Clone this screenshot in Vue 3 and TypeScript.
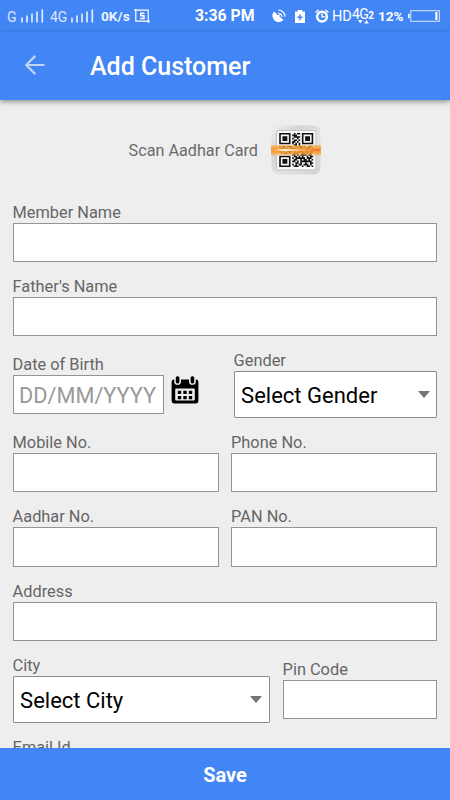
<script setup lang="ts">
import { reactive } from 'vue'

const form = reactive({
  memberName: '',
  fatherName: '',
  birthDate: '',
  mobile: '',
  phone: '',
  aadhar: '',
  pan: '',
  address: '',
  pinCode: '',
})

const qrRows: string[] = [
  '111111100101101111111',
  '100000101110001000001',
  '101110100111101011101',
  '101110101001001011101',
  '101110100110101011101',
  '100000101101001000001',
  '111111101010101111111',
  '000000000110100000000',
  '101101110010110100110',
  '011010011101011011101',
  '110110101011010110010',
  '101001110100111011011',
  '010110100111001101010',
  '000000001101011110110',
  '111111100110101001011',
  '100000101011111101110',
  '101110100110010110101',
  '101110101101011111110',
  '101110100011010010011',
  '100000101010110111010',
  '111111100111001001101',
]

const qrPath: string = qrRows
  .flatMap((row, y) => [...row].map((cell, x) => (cell === '1' ? `M${x} ${y}h1v1h-1z` : '')))
  .join('')
</script>

<template>
  <div class="screen">
    <div class="status">
      <span class="net g1">G</span>
      <svg class="bars" viewBox="0 0 24 14"><path d="M1 8.5v5M6 6.5v7M11 4.5v9M16 2.5v11M21.3 .5v13" /></svg>
      <span class="net g4">4G</span>
      <svg class="bars" viewBox="0 0 24 14"><path d="M1 8.5v5M6 6.5v7M11 4.5v9M16 2.5v11M21.3 .5v13" /></svg>
      <span class="speed">0K/s</span>
      <svg class="shot" viewBox="0 0 16 14">
        <path d="M0 1.2h14.2V14M1.8 0v12.2H16" fill="none" stroke="#fff" stroke-width="1.2" />
        <path d="M10.4 4.2H6.8v2.6h3.2v2.7H6.2" fill="none" stroke="#fff" stroke-width="1.5" />
      </svg>
      <span class="time">3:36 PM</span>
      <svg class="dish" viewBox="0 0 14 14">
        <path d="M2 2.5 11.5 11A6.3 6.3 0 0 1 2 2.5z" fill="#fff" />
        <path d="M6 4a4.3 4.3 0 0 1 4 4M6.3 1a6.8 6.8 0 0 1 6.7 6.7M6 7l3-2" fill="none" stroke="#fff" stroke-width="1.2" />
      </svg>
      <svg class="saver" viewBox="0 0 10 13">
        <path d="M0 1.5h2.7V0h4.6v1.5H10V13H0z" fill="#fff" />
        <path d="M5.8 3.2 2 8h2.5L4 11.2 8 6.4H5.4z" fill="#4285f4" />
      </svg>
      <svg class="alarm" viewBox="0 0 14 14">
        <circle cx="7" cy="7.6" r="4.9" fill="none" stroke="#fff" stroke-width="2.4" />
        <path d="M7 4.6v3.3h3M.6 3.5 3.6.8M10.4.8l3 2.7" fill="none" stroke="#fff" stroke-width="1.4" />
      </svg>
      <span class="hd">HD</span>
      <span class="lte">
        <span>4G</span><b>2</b>
        <svg viewBox="0 0 12 4"><path d="M0 0h4.6L2.3 3.6zM6.2 3.6h4.6L8.5 0z" fill="#fff" /></svg>
      </span>
      <span class="percent">12%</span>
      <svg class="cell" viewBox="0 0 32 12">
        <path d="M2.7.6h28.7v10.8H2.7z" fill="none" stroke="#bdd4fc" stroke-width="1.2" />
        <path d="M0 3.8h1.6v4.5H0zM27.3 2h2.2v8h-2.2z" fill="#fff" />
      </svg>
    </div>

    <header class="toolbar">
      <svg class="back" viewBox="0 0 20 20"><path d="M19.5 10H1.5M10.3.9 1.2 10l9.1 9.1" /></svg>
      <h1>Add Customer</h1>
    </header>

    <main class="form">
      <div class="scan">
        <span>Scan Aadhar Card</span>
        <svg class="qr" viewBox="0 0 50 50">
          <defs>
            <linearGradient id="plate" x1="0" y1="0" x2="1" y2="1">
              <stop offset="0" stop-color="#f1f1f1" />
              <stop offset=".3" stop-color="#d2d4d5" />
              <stop offset=".6" stop-color="#e2e3e4" />
              <stop offset="1" stop-color="#cfd1d2" />
            </linearGradient>
            <linearGradient id="beam" x1="0" y1="0" x2="0" y2="1">
              <stop offset="0" stop-color="#f9b04e" stop-opacity=".7" />
              <stop offset=".3" stop-color="#f79a2b" />
              <stop offset=".7" stop-color="#f79a2b" />
              <stop offset="1" stop-color="#fbb65a" stop-opacity=".6" />
            </linearGradient>
            <linearGradient id="core" x1="0" y1="0" x2="1" y2="0">
              <stop offset="0" stop-color="#ff8a20" />
              <stop offset=".25" stop-color="#fff3e2" />
              <stop offset=".5" stop-color="#ffc184" />
              <stop offset="1" stop-color="#f26a1c" />
            </linearGradient>
          </defs>
          <rect x=".5" y=".5" width="49" height="49" rx="7" fill="url(#plate)" />
          <rect x="5.5" y="5.5" width="39.5" height="39.5" rx="2" fill="#f7f7f7" stroke="#c0c1c2" />
          <path :d="qrPath" fill="#111" transform="translate(8.2 8) scale(1.62)" />
          <rect x="0" y="20" width="50" height="10.5" fill="url(#beam)" opacity=".88" />
          <rect x="1" y="24" width="48" height="2" rx="1" fill="url(#core)" />
        </svg>
      </div>

      <label class="field">
        <span>Member Name</span>
        <input v-model="form.memberName" type="text" />
      </label>
      <label class="field">
        <span>Father's Name</span>
        <input v-model="form.fatherName" type="text" />
      </label>

      <div class="row birth">
        <label class="field dob">
          <span>Date of Birth</span>
          <input v-model="form.birthDate" type="text" placeholder="DD/MM/YYYY" />
        </label>
        <svg class="calendar" viewBox="0 0 28 28">
          <path d="M3 3.5h22a2.4 2.4 0 0 1 2.4 2.4V25a2.4 2.4 0 0 1-2.4 2.4H3A2.4 2.4 0 0 1 .6 25V5.9A2.4 2.4 0 0 1 3 3.5z" />
          <rect x="4.2" y="12.6" width="19.6" height="12" rx="1" fill="#ededed" />
          <path d="M3.2 1v4.4a3.4 3.4 0 0 0 6.8 0V1M18 1v4.4a3.4 3.4 0 0 0 6.8 0V1" fill="#ededed" />
          <rect x="4.8" y=".2" width="3.6" height="7.2" rx="1.6" />
          <rect x="19.6" y=".2" width="3.6" height="7.2" rx="1.6" />
          <path d="M6.8 14.8h3.4V18H6.8zM12.3 14.8h3.4V18h-3.4zM17.8 14.8h3.4V18h-3.4zM6.8 20h3.4v3.2H6.8zM12.3 20h3.4v3.2h-3.4zM17.8 20h3.4v3.2h-3.4z" />
        </svg>
        <div class="field gender">
          <span>Gender</span>
          <button class="select" type="button">Select Gender<i /></button>
        </div>
      </div>

      <div class="row halves">
        <label class="field">
          <span>Mobile No.</span>
          <input v-model="form.mobile" type="text" />
        </label>
        <label class="field">
          <span>Phone No.</span>
          <input v-model="form.phone" type="text" />
        </label>
      </div>
      <div class="row halves">
        <label class="field">
          <span>Aadhar No.</span>
          <input v-model="form.aadhar" type="text" />
        </label>
        <label class="field">
          <span>PAN No.</span>
          <input v-model="form.pan" type="text" />
        </label>
      </div>

      <label class="field">
        <span>Address</span>
        <input v-model="form.address" type="text" />
      </label>

      <div class="row place">
        <div class="field city">
          <span>City</span>
          <button class="select" type="button">Select City<i /></button>
        </div>
        <label class="field pin">
          <span>Pin Code</span>
          <input v-model="form.pinCode" type="text" />
        </label>
      </div>

      <div class="field email"><span>Email Id</span></div>
    </main>

    <button class="save" type="button">Save</button>
  </div>
</template>

<style>
body {
  overflow: hidden;
}
</style>

<style scoped>
.screen {
  display: flex;
  flex-direction: column;
  width: 450px;
  height: 800px;
  overflow: hidden;
  background: #eee;
  font-family: Roboto, sans-serif;
}
.screen * {
  box-sizing: border-box;
}
svg {
  display: block;
}
.status {
  flex: none;
  display: grid;
  grid-template-columns: 14px 29px 21px 30px 33px 61px 77px 23px 20px 17px 20px 26px 30px 32px;
  align-items: center;
  height: 32px;
  padding-left: 7px;
  background: #4285f4;
  color: #fff;
  white-space: nowrap;
  line-height: 16px;
}
.net {
  font-size: 14px;
  color: #dce8fd;
  padding-top: 2px;
}
.bars {
  width: 24px;
  height: 14px;
  margin-bottom: 1px;
  fill: none;
  stroke: #e8f0fe;
  stroke-width: 1.6;
}
.speed {
  font-size: 13.7px;
  font-weight: 700;
  color: #eef4ff;
}
.shot {
  width: 16px;
  height: 14px;
}
.time {
  font-size: 15.8px;
  font-weight: 700;
}
.dish {
  width: 14px;
  height: 14px;
}
.saver {
  width: 10px;
  height: 13px;
}
.alarm {
  width: 14px;
  height: 14px;
}
.hd {
  font-size: 14.5px;
  padding-top: 1px;
}
.lte {
  position: relative;
  display: flex;
  height: 22px;
  font-size: 14px;
  letter-spacing: -0.6px;
  line-height: 18px;
}
.lte b {
  font-size: 10px;
  line-height: 22px;
}
.lte svg {
  position: absolute;
  left: 6px;
  top: 15px;
  width: 12px;
  height: 4px;
}
.percent {
  font-size: 13.6px;
  font-weight: 700;
}
.cell {
  width: 32px;
  height: 12px;
  margin-bottom: 1px;
}
.toolbar {
  flex: none;
  position: relative;
  display: flex;
  align-items: center;
  height: 68px;
  padding: 0 25px 2px;
  background: #4285f4;
  box-shadow: 0 2px 5px rgba(0, 0, 0, 0.38);
  z-index: 1;
}
.back {
  width: 20px;
  height: 20px;
  fill: none;
  stroke: #c0d5fb;
  stroke-width: 2.2;
}
h1 {
  margin: 4px 0 0 45px;
  color: #fff;
  font-size: 25px;
  font-weight: 500;
  line-height: 30px;
}
.form {
  flex: 1;
  min-height: 0;
  overflow: hidden;
  padding: 25px 13px 0 12.6px;
}
.scan {
  display: flex;
  align-items: center;
  height: 50px;
  margin-bottom: 27.7px;
  padding-left: 116px;
  color: #6b6b6b;
  font-size: 16.2px;
}
.qr {
  width: 50px;
  height: 50px;
  margin-left: 12.6px;
}
.field {
  display: block;
  color: #666;
  font-size: 16.35px;
}
.field > span {
  display: block;
  height: 20px;
  line-height: 19px;
  white-space: nowrap;
}
.form > .field {
  margin-bottom: 15px;
}
.halves {
  margin-bottom: 15.2px;
}
input {
  display: block;
  width: 100%;
  height: 39.3px;
  margin: 0;
  padding: 0 6px;
  border: 1px solid #949494;
  border-radius: 0;
  background: #fff;
  color: #000;
  font: 21.7px Roboto, sans-serif;
  outline: none;
}
.dob input {
  padding: 1.5px 5.5px 0;
}
input::placeholder {
  color: #999;
  opacity: 1;
}
.row {
  display: flex;
}
.birth {
  margin-bottom: 15px;
}
.dob {
  width: 151.4px;
  padding-top: 3.5px;
}
.calendar {
  width: 28px;
  height: 28px;
  margin: 24.4px 0 0 7px;
}
.gender {
  width: 203.4px;
  margin-left: auto;
}
.select {
  display: flex;
  align-items: center;
  justify-content: space-between;
  width: 100%;
  height: 46.6px;
  margin: 0;
  padding: 2px 6.5px 0;
  border: 1px solid #8c8c8c;
  border-radius: 1px;
  background: #fff;
  color: #000;
  font: 22px Roboto, sans-serif;
}
.select i {
  border: 6px solid transparent;
  border-top: 7px solid #737373;
  border-bottom: 0;
  margin-top: -2px;
}
.halves {
  gap: 12.5px;
}
.halves .field {
  flex: 1;
}
.place {
  justify-content: space-between;
  margin-bottom: 15px;
}
.city {
  width: 257.4px;
}
.pin {
  width: 154.4px;
  padding-top: 4px;
}
.save {
  flex: none;
  height: 52px;
  padding: 2px 0 0;
  border: 0;
  background: #4285f4;
  color: #fff;
  font: 700 20px Roboto, sans-serif;
}
</style>
